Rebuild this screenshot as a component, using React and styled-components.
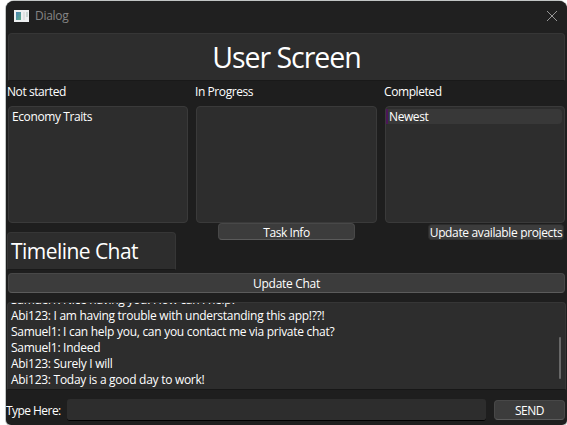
import React from "react";
import styled, { createGlobalStyle } from "styled-components";

const GlobalStyle = createGlobalStyle`
  * { box-sizing: border-box; }
  html, body { margin: 0; height: 425px; overflow: hidden; background: #fff; }
  body { font-family: "Open Sans", "Noto Sans", sans-serif; font-size: 12px; line-height: 16px; color: #fff; }
`;

const Desktop = styled.main`
  height: 425px;
  padding: 1px 0 0 6px;
  overflow: hidden;
`;

const Window = styled.section`
  display: flex;
  flex-direction: column;
  height: 424px;
  background: #1e1e1e;
  border-radius: 8px 8px 5px 5px;
  box-shadow: 0 0 0 1px #c1c5c4;
`;

const TitleBar = styled.header`
  display: flex;
  align-items: center;
  flex: none;
  height: 32px;
  padding: 0 9px 3px 8px;
  background: #202020;
  border-radius: 8px 8px 0 0;
  color: #858585;
`;

const Label = styled.span`
  display: block;
  white-space: pre;
  letter-spacing: ${(p) => p.$spacing ?? -0.3}px;
`;

const WindowTitle = styled(Label)`
  flex: 1;
  margin-left: 6px;
`;

const Banner = styled.h1`
  flex: none;
  display: flex;
  align-items: center;
  justify-content: center;
  height: 48px;
  margin: 0 2px;
  border: 1px solid #363636;
  border-bottom-color: #191919;
  border-radius: 4px 4px 1px 1px;
  background: #2d2d2d;
  font-size: 28.5px;
  font-weight: 400;
  line-height: 40px;
`;

const Board = styled.div`
  flex: none;
  display: grid;
  grid-template-columns: 180px 181px 180px;
  column-gap: 8px;
  height: 142px;
  padding-left: 2px;
`;

const Column = styled.section`
  display: flex;
  flex-direction: column;
`;

const ColumnTitle = styled.h2`
  height: 25px;
  margin: 0 0 0 -1px;
  padding-top: 3px;
  font: inherit;
`;

const List = styled.ul`
  flex: 1;
  margin: 0;
  padding: 2px;
  list-style: none;
  border: 1px solid #3a3a3a;
  border-radius: 4px;
  background: #2d2d2d;
`;

const Item = styled.li`
  height: 15px;
  line-height: 16px;
  padding-left: 1px;
  border-radius: 0 4px 4px 0;
  ${(p) =>
    p.$selected &&
    `background: #383838; margin-left: -2px; border-left: 2px solid #4b1658;`}
`;

const Actions = styled.div`
  flex: none;
  display: flex;
  align-items: flex-start;
  height: 50px;
  padding: 0 3px 0 1px;
`;

const ChatHeading = styled.h2`
  width: 169px;
  height: 38px;
  margin: 9px 42px 0 0;
  padding: 4px 0 0 3px;
  border: 1px solid #363636;
  border-bottom-color: #191919;
  border-radius: 4px 4px 1px 1px;
  background: #2d2d2d;
  font-size: 21px;
  font-weight: 400;
  line-height: 28px;
`;

const Button = styled.button`
  display: flex;
  align-items: center;
  justify-content: center;
  flex: none;
  width: ${(p) => p.$width};
  height: ${(p) => p.$height}px;
  margin: ${(p) => p.$margin ?? "0"};
  padding: ${(p) => p.$padding ?? "0"};
  border: 1px solid ${(p) => (p.$flat ? "#2d2d2d" : "#484848")};
  border-bottom-color: ${(p) => (p.$flat ? "#343434" : "#5b5b5b")};
  border-radius: 4px;
  background: #3c3c3c;
  color: #fff;
  font: inherit;
  overflow: hidden;
`;

const ChatLog = styled.div`
  flex: none;
  display: flex;
  align-items: flex-end;
  justify-content: space-between;
  height: 88px;
  margin: 9px 0 0 1px;
  width: 559px;
  padding: 0 4px 1px 3px;
  overflow: hidden;
  border: 1px solid #363636;
  border-bottom-color: #171717;
  border-radius: 4px 4px 1px 1px;
  background: #2d2d2d;
`;

const ScrollThumb = styled.i`
  width: 2px;
  height: 42px;
  margin-bottom: 9px;
  border-radius: 1px;
  background: #686868;
`;

const Composer = styled.form`
  flex: none;
  display: flex;
  height: 22px;
  margin: 9px 2px 0 0;
`;

const ComposerLabel = styled.label`
  width: 61px;
  padding-top: 4px;
`;

const MessageInput = styled.input`
  width: 419px;
  height: 22px;
  margin: 0 8px 0 0;
  padding: 0 6px;
  border: 0;
  border-bottom: 1px solid #000;
  border-radius: 3px;
  outline: 0;
  background: #2d2d2d;
  color: #fff;
  font: inherit;
`;

const AppIcon = () => (
  <svg width="15" height="12" viewBox="0 0 15 12" shapeRendering="crispEdges">
    <defs>
      <linearGradient id="pane" x1="0" y1="0" x2="1" y2="1">
        <stop offset="0" stopColor="#4a83b4" />
        <stop offset="1" stopColor="#5fae8b" />
      </linearGradient>
    </defs>
    <rect width="15" height="12" fill="#eef0f1" />
    <rect x="2" y="2" width="5" height="8" fill="url(#pane)" />
    <rect x="9" y="2" width="2" height="8" fill="#dfe1e2" />
    <rect x="12" y="2" width="2" height="5" fill="#c9d6d3" />
  </svg>
);

const CloseIcon = () => (
  <svg width="12" height="12" viewBox="0 0 12 12" stroke="#969696" strokeWidth="1">
    <path d="M1 1L11 11M11 1L1 11" />
  </svg>
);

const columns = [
  { title: "Not started", items: ["Economy Traits"] },
  { title: "In Progress", items: [] },
  { title: "Completed", items: ["Newest"], selected: true },
];

const messages = [
  "Samuel1: Nice having you! How can I help?",
  "Abi123: I am having trouble with understanding this app!??!",
  "Samuel1: I can help you, can you contact me via private chat?",
  "Samuel1: Indeed",
  "Abi123: Surely I will",
  "Abi123: Today is a good day to work!",
];

export default function App() {
  return (
    <Desktop>
      <GlobalStyle />
      <Window>
        <TitleBar>
          <AppIcon />
          <WindowTitle>Dialog</WindowTitle>
          <CloseIcon />
        </TitleBar>
        <Banner>
          <Label $spacing={-1.05}>User Screen</Label>
        </Banner>
        <Board>
          {columns.map((c) => (
            <Column key={c.title}>
              <ColumnTitle>
                <Label $spacing={-0.42}>{c.title}</Label>
              </ColumnTitle>
              <List>
                {c.items.map((item) => (
                  <Item key={item} $selected={c.selected}>
                    <Label $spacing={-0.4}>{item}</Label>
                  </Item>
                ))}
              </List>
            </Column>
          ))}
        </Board>
        <Actions>
          <ChatHeading>
            <Label $spacing={-0.55}>Timeline Chat</Label>
          </ChatHeading>
          <Button $width="137px" $height={17} $padding="2px 0 0">
            <Label $spacing={-0.45}>Task Info</Label>
          </Button>
          <Button $width="136px" $height={16} $margin="1px 0 0 auto" $padding="2px 0 0" $flat>
            <Label $spacing={-0.36}>Update available projects</Label>
          </Button>
        </Actions>
        <Button $width="557px" $height={20} $margin="0 2px" $padding="1px 0 0">
          <Label>Update Chat</Label>
        </Button>
        <ChatLog>
          <div>
            {messages.map((m) => (
              <Label key={m} $spacing={-0.28}>{m}</Label>
            ))}
          </div>
          <ScrollThumb />
        </ChatLog>
        <Composer onSubmit={(e) => e.preventDefault()}>
          <ComposerLabel htmlFor="message">
            <Label $spacing={-0.55}>Type Here:</Label>
          </ComposerLabel>
          <MessageInput id="message" />
          <Button $width="71px" $height={20} $margin="1px 0 0" $padding="1px 0 0">
            <Label $spacing={-0.5}>SEND</Label>
          </Button>
        </Composer>
      </Window>
    </Desktop>
  );
}
